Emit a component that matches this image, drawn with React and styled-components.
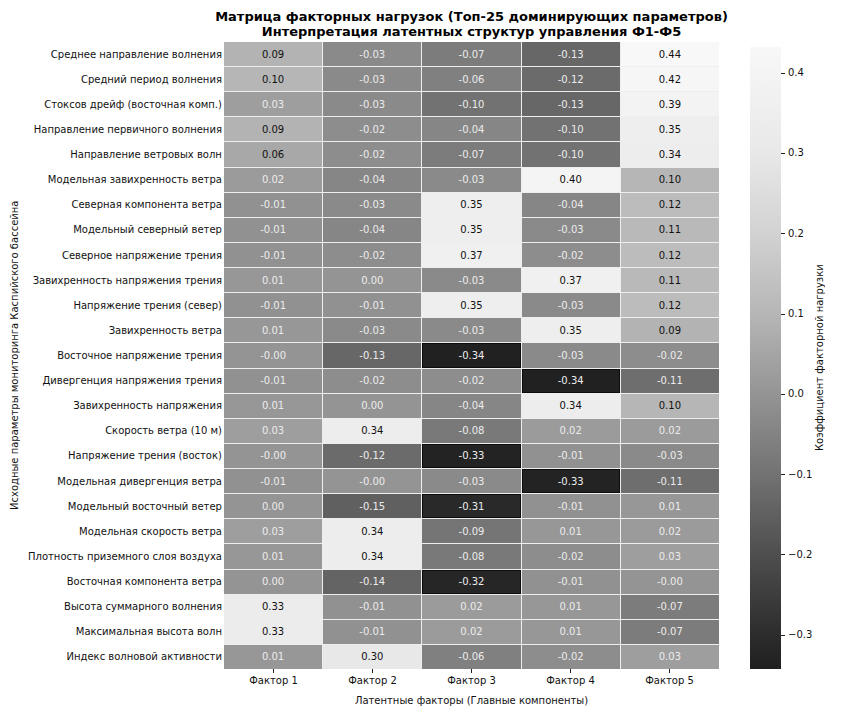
import React from 'react';
import styled, { createGlobalStyle } from 'styled-components';

const VMIN = -0.342;
const VMAX = 0.4325;

// value -> grey level, read off the colour bar
const STOPS = [
  [-0.342, 32],
  [-0.3, 44],
  [-0.2, 78],
  [-0.1, 114],
  [0, 148],
  [0.1, 182],
  [0.2, 210],
  [0.3, 232],
  [0.4325, 248],
];

const FACTORS = ['Фактор 1', 'Фактор 2', 'Фактор 3', 'Фактор 4', 'Фактор 5'];

const ROWS = [
  ['Среднее направление волнения', ['0.09', '-0.03', '-0.07', '-0.13', '0.44']],
  ['Средний период волнения', ['0.10', '-0.03', '-0.06', '-0.12', '0.42']],
  ['Стоксов дрейф (восточная комп.)', ['0.03', '-0.03', '-0.10', '-0.13', '0.39']],
  ['Направление первичного волнения', ['0.09', '-0.02', '-0.04', '-0.10', '0.35']],
  ['Направление ветровых волн', ['0.06', '-0.02', '-0.07', '-0.10', '0.34']],
  ['Модельная завихренность ветра', ['0.02', '-0.04', '-0.03', '0.40', '0.10']],
  ['Северная компонента ветра', ['-0.01', '-0.03', '0.35', '-0.04', '0.12']],
  ['Модельный северный ветер', ['-0.01', '-0.04', '0.35', '-0.03', '0.11']],
  ['Северное напряжение трения', ['-0.01', '-0.02', '0.37', '-0.02', '0.12']],
  ['Завихренность напряжения трения', ['0.01', '0.00', '-0.03', '0.37', '0.11']],
  ['Напряжение трения (север)', ['-0.01', '-0.01', '0.35', '-0.03', '0.12']],
  ['Завихренность ветра', ['0.01', '-0.03', '-0.03', '0.35', '0.09']],
  ['Восточное напряжение трения', ['-0.00', '-0.13', '-0.34', '-0.03', '-0.02']],
  ['Дивергенция напряжения трения', ['-0.01', '-0.02', '-0.02', '-0.34', '-0.11']],
  ['Завихренность напряжения', ['0.01', '0.00', '-0.04', '0.34', '0.10']],
  ['Скорость ветра (10 м)', ['0.03', '0.34', '-0.08', '0.02', '0.02']],
  ['Напряжение трения (восток)', ['-0.00', '-0.12', '-0.33', '-0.01', '-0.03']],
  ['Модельная дивергенция ветра', ['-0.01', '-0.00', '-0.03', '-0.33', '-0.11']],
  ['Модельный восточный ветер', ['0.00', '-0.15', '-0.31', '-0.01', '0.01']],
  ['Модельная скорость ветра', ['0.03', '0.34', '-0.09', '0.01', '0.02']],
  ['Плотность приземного слоя воздуха', ['0.01', '0.34', '-0.08', '-0.02', '0.03']],
  ['Восточная компонента ветра', ['0.00', '-0.14', '-0.32', '-0.01', '-0.00']],
  ['Высота суммарного волнения', ['0.33', '-0.01', '0.02', '0.01', '-0.07']],
  ['Максимальная высота волн', ['0.33', '-0.01', '0.02', '0.01', '-0.07']],
  ['Индекс волновой активности', ['0.01', '0.30', '-0.06', '-0.02', '0.03']],
];

const CB_TICKS = [0.4, 0.3, 0.2, 0.1, 0, -0.1, -0.2, -0.3];

function greyFor(v) {
  const x = Math.min(VMAX, Math.max(VMIN, v));
  for (let i = 1; i < STOPS.length; i++) {
    const [v0, g0] = STOPS[i - 1];
    const [v1, g1] = STOPS[i];
    if (x <= v1) {
      const g = Math.round(g0 + ((x - v0) / (v1 - v0)) * (g1 - g0));
      return `rgb(${g},${g},${g})`;
    }
  }
  return 'rgb(248,248,248)';
}

const pct = (v) => ((VMAX - v) / (VMAX - VMIN)) * 100;

const barGradient = `linear-gradient(to bottom, ${[...STOPS]
  .reverse()
  .map(([v]) => `${greyFor(v)} ${pct(v).toFixed(2)}%`)
  .join(', ')})`;

const tickText = (v) => (v < 0 ? '\u2212' + Math.abs(v).toFixed(1) : v.toFixed(1));

export default function App() {
  return (
    <>
      <GlobalStyle />
      <Figure>
        <Title>
          <span>Матрица факторных нагрузок (Топ-25 доминирующих параметров)</span>
          <span>Интерпретация латентных структур управления Ф1-Ф5</span>
        </Title>

        <YTitle>Исходные параметры мониторинга Каспийского бассейна</YTitle>

        <RowLabels>
          {ROWS.map(([name]) => (
            <RowLabel key={name}>
              {name}
              <HTick />
            </RowLabel>
          ))}
        </RowLabels>

        <Heatmap>
          {ROWS.map(([name, vals]) =>
            vals.map((s, i) => {
              const v = parseFloat(s);
              return (
                <Cell key={name + i} $bg={greyFor(v)} $light={v >= 0.05} $deep={v <= -0.3}>
                  {s}
                </Cell>
              );
            })
          )}
        </Heatmap>

        <Colorbar>
          <Bar style={{ background: barGradient }} />
          <CbAxis>
            {CB_TICKS.map((t) => (
              <CbTick key={t} style={{ top: pct(t) + '%' }}>
                <HTick />
                <span>{tickText(t)}</span>
              </CbTick>
            ))}
          </CbAxis>
          <CbTitle>Коэффициент факторной нагрузки</CbTitle>
        </Colorbar>

        <XTicks>
          {FACTORS.map((f) => (
            <XTick key={f}>
              <VTick />
              {f}
            </XTick>
          ))}
        </XTicks>

        <XTitle>Латентные факторы (Главные компоненты)</XTitle>
      </Figure>
    </>
  );
}

const GlobalStyle = createGlobalStyle`
  html, body {
    margin: 0;
    padding: 0;
    background: #fff;
  }
  body {
    width: 854px;
    height: 711px;
    overflow: hidden;
    font-family: "DejaVu Sans", "Noto Sans", sans-serif;
    color: #111;
  }
`;

const Figure = styled.div`
  display: grid;
  grid-template-columns: 28px 196px 495px 31px 1fr;
  grid-template-rows: 42px 627px auto auto;
  width: 854px;
  height: 711px;
`;

const Title = styled.div`
  grid-column: 3;
  grid-row: 1;
  display: flex;
  flex-direction: column;
  align-items: center;
  justify-content: flex-end;
  padding-bottom: 3px;
  font-size: 13px;
  font-weight: 700;
  line-height: 15px;
  color: #000;
  white-space: nowrap;
`;

const YTitle = styled.div`
  grid-column: 1;
  grid-row: 2;
  display: flex;
  align-items: center;
  justify-content: center;
  writing-mode: vertical-rl;
  transform: rotate(180deg);
  font-size: 10px;
  white-space: nowrap;
`;

const RowLabels = styled.div`
  grid-column: 2;
  grid-row: 2;
  display: grid;
  grid-template-rows: repeat(25, 1fr);
  row-gap: 1px;
`;

const RowLabel = styled.div`
  display: flex;
  align-items: center;
  justify-content: flex-end;
  font-size: 10px;
  white-space: nowrap;
`;

const HTick = styled.i`
  display: block;
  width: 4px;
  height: 1px;
  background: #222;
  margin: 0 3px 0 3px;

  ${RowLabel} & {
    margin-right: 0;
  }
`;

const Heatmap = styled.div`
  grid-column: 3;
  grid-row: 2;
  display: grid;
  grid-template-columns: repeat(5, 1fr);
  grid-template-rows: repeat(25, 1fr);
  gap: 1px;
  background: #eeeeee;
`;

const Cell = styled.div`
  display: flex;
  align-items: center;
  justify-content: center;
  background: ${(p) => p.$bg};
  color: ${(p) => (p.$light ? '#111' : '#ececec')};
  font-size: 10px;
  box-shadow: ${(p) => (p.$deep ? 'inset 0 0 0 1px #0c0c0c' : 'none')};
`;

const Colorbar = styled.div`
  grid-column: 5;
  grid-row: 2;
  display: flex;
  margin-top: 5px;
  height: 622px;
`;

const Bar = styled.div`
  width: 31px;
  height: 100%;
`;

const CbAxis = styled.div`
  position: relative;
  width: 31px;
  height: 100%;
`;

const CbTick = styled.div`
  position: absolute;
  left: 0;
  display: flex;
  align-items: center;
  transform: translateY(-50%);
  font-size: 10px;
  line-height: 12px;

  ${HTick} {
    margin: 0 3px 0 0;
  }
`;

const CbTitle = styled.div`
  display: flex;
  align-items: center;
  justify-content: center;
  width: 14px;
  writing-mode: vertical-rl;
  transform: rotate(180deg);
  font-size: 10px;
  white-space: nowrap;
`;

const XTicks = styled.div`
  grid-column: 3;
  grid-row: 3;
  display: grid;
  grid-template-columns: repeat(5, 1fr);
`;

const XTick = styled.div`
  display: flex;
  flex-direction: column;
  align-items: center;
  font-size: 10px;
  line-height: 12px;
`;

const VTick = styled.i`
  display: block;
  width: 1px;
  height: 4px;
  background: #222;
  margin-bottom: 2px;
`;

const XTitle = styled.div`
  grid-column: 3;
  grid-row: 4;
  display: flex;
  justify-content: center;
  margin-top: 3px;
  font-size: 10px;
  line-height: 12px;
  white-space: nowrap;
`;
